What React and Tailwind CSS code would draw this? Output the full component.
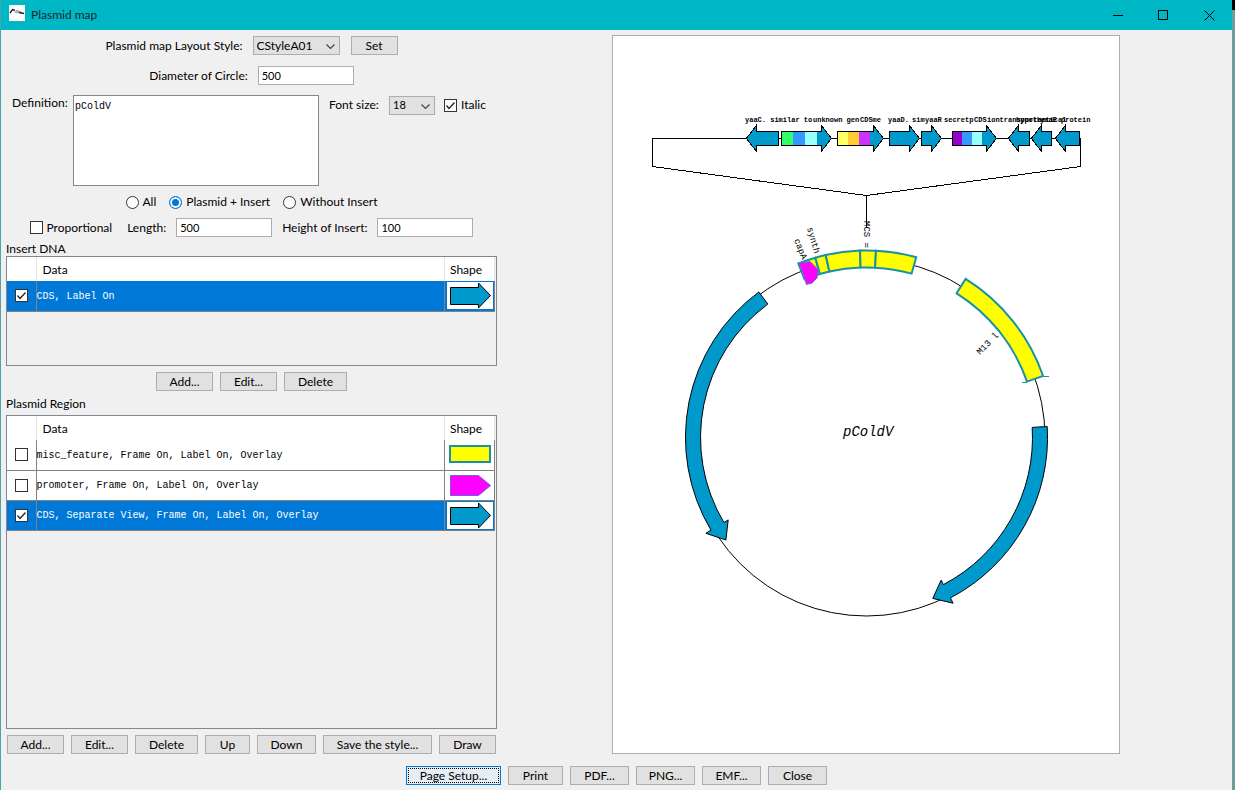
import React, { useState } from 'react';

const BLUE = '#0099cc';
const FRAME = '#1890a8';

// Center and radius of the plasmid circle
const CX = 253.5;
const CY = 401.5;
const RADIUS = 178.5;

// Angle 0 is the top of the circle, clockwise
const polar = (r, deg) => {
  const a = (deg * Math.PI) / 180;
  return `${(CX + r * Math.sin(a)).toFixed(1)} ${(CY - r * Math.cos(a)).toFixed(1)}`;
};

const bandPath = (r1, r2, from, to) =>
  `M${polar(r2, from)} A${r2} ${r2} 0 0 1 ${polar(r2, to)} L${polar(r1, to)} A${r1} ${r1} 0 0 0 ${polar(r1, from)} Z`;

// Curved arrow, the head ends at tip
const arrowPath = (from, to, tip) => {
  const cw = tip > from ? 1 : 0;
  return `M${polar(181, from)} A181 181 0 0 ${cw} ${polar(181, to)} L${polar(187, to)} L${polar(174, tip)} L${polar(161, to)} L${polar(166, to)} A166 166 0 0 ${1 - cw} ${polar(166, from)} Z`;
};

const genes = [
  { start: 165, tip: 133 },
  { start: 168, tip: 218, colors: ['#33ff66', '#3399ff', '#99ffff'], step: 12 },
  { start: 224, tip: 270, colors: ['#ffff66', '#ffcc33', '#cc33ff'], step: 11 },
  { start: 276, tip: 306 },
  { start: 308, tip: 328 },
  { start: 339, tip: 383, colors: ['#9900cc', '#3399ff', '#99ffff'], step: 10 },
  { start: 416, tip: 395 },
  { start: 438, tip: 418 },
  { start: 466, tip: 442 },
];

const geneLabels = [
  { x: 132, text: 'yaaC. similar to' },
  { x: 200, text: 'unknown gen' },
  { x: 247, text: 'CDSme' },
  { x: 275, text: 'yaaD.' },
  { x: 299, text: 'sim' },
  { x: 312, text: 'yaaR' },
  { x: 331, text: 'secretp' },
  { x: 361, text: 'CDS' },
  { x: 374, text: 'iontransporter' },
  { x: 403, text: 'hypothetical' },
  { x: 427, text: 'yaaE protein' },
];

const insertRows = [{ text: 'CDS, Label On', shape: 'arrow', on: true }];

const regionRows = [
  { text: 'misc_feature, Frame On, Label On, Overlay', shape: 'box', on: false },
  { text: 'promoter, Frame On, Label On, Overlay', shape: 'tag', on: false },
  { text: 'CDS, Separate View, Frame On, Label On, Overlay', shape: 'arrow', on: true },
];

const Gene = ({ start, tip, colors = [], step }) => {
  const back = tip > start ? tip - 10 : tip + 10;
  return (
    <g>
      <path
        d={`M${start} 95 H${back} V89 L${tip} 102 L${back} 115 V109 H${start} Z`}
        fill={BLUE}
      />
      {colors.map((color, i) => (
        <rect key={color} x={start + i * step} y="95" width={step} height="14" fill={color} />
      ))}
      <path
        d={`M${start} 95 H${back} V89 L${tip} 102 L${back} 115 V109 H${start} Z`}
        fill="none"
        stroke="#000"
      />
    </g>
  );
};

const PlasmidDrawing = () => (
  <svg
    viewBox="0 0 506 717"
    preserveAspectRatio="xMidYMin meet"
    className="block h-full w-full font-['Liberation_Mono',monospace]"
    role="img"
    aria-label="Plasmid map"
  >
    {/* Insert */}
    <g shapeRendering="crispEdges">
      <path
        d="M39.5 102.5 H467.5 V130.5 L253.5 159.5 L39.5 130.5 Z M253.5 159.5 V192"
        fill="none"
        stroke="#000"
      />
      <g transform="translate(.4 .4)">
        {genes.map((gene) => (
          <Gene key={gene.start} {...gene} />
        ))}
      </g>
    </g>
    <g fontSize="7" fontWeight="bold">
      {geneLabels.map((label) => (
        <text key={label.x} x={label.x} y="86">
          {label.text}
        </text>
      ))}
    </g>

    {/* Plasmid */}
    <circle cx={CX} cy={CY} r={RADIUS} fill="none" stroke="#000" />
    <path d={arrowPath(-36.5, -120.8, -126.1)} fill={BLUE} stroke="#000" />
    <path d={arrowPath(86.5, 152.4, 157.6)} fill={BLUE} stroke="#000" />
    <g fill="#ffff00" stroke={FRAME} strokeWidth="2">
      <path d={bandPath(170, 187, 32, 70.8)} />
      <path d="M429 340.5 H436 M409 346.5 H414" strokeWidth="1" />
      <path d={bandPath(170, 187, -21.4, -15.9)} />
      <path d={bandPath(170, 187, -15.9, -12.6)} />
      <path d={bandPath(170, 187, -12.6, -2)} />
      <path d={bandPath(170, 187, -2, 2.9)} />
      <path d={bandPath(170, 187, 2.9, 15.4)} />
    </g>
    <path
      d="M186 227 L197 225.5 L205.5 234 L204 242 L199 247 L193.5 248.5 Z"
      fill="#ff00ff"
      stroke="#4a7fc0"
    />

    {/* Labels */}
    <g fontSize="9">
      <text transform="translate(251 185) rotate(90)">MCS =</text>
      <text transform="translate(194 192) rotate(74)">synth</text>
      <text transform="translate(181 204) rotate(68)">capA</text>
      <text transform="translate(367 319) rotate(-45)">M13 l</text>
    </g>
    <text x="230" y="400" fontSize="14" fontStyle="italic">
      pColdV
    </text>
  </svg>
);

const Shape = ({ kind }) => (
  <svg viewBox="0 0 46 27" className="mx-auto block h-[27px] w-[46px] bg-white" aria-hidden="true">
    {kind === 'arrow' && (
      <path
        d="M3.5 5.5 H31.5 V1 L43.5 13.5 L31.5 26 V22.5 H3.5 Z"
        fill={BLUE}
        stroke="#000"
      />
    )}
    {kind === 'box' && (
      <rect x="3" y="5" width="40" height="16" fill="#ffff00" stroke={FRAME} strokeWidth="2" />
    )}
    {kind === 'tag' && (
      <path d="M3.5 3.5 H31.5 L43.5 13.5 L31.5 23.5 H3.5 Z" fill="#ff00ff" stroke="#7060d8" />
    )}
  </svg>
);

const CheckBox = ({ defaultChecked = false, ...props }) => (
  <span className="relative inline-flex h-[13px] w-[13px] shrink-0">
    <input
      type="checkbox"
      defaultChecked={defaultChecked}
      className="peer h-[13px] w-[13px] appearance-none border border-[#333] bg-white"
      {...props}
    />
    <svg
      viewBox="0 0 13 13"
      className="pointer-events-none absolute inset-0 hidden peer-checked:block"
      aria-hidden="true"
    >
      <path d="M2.5 6.5 L5 9.5 L10.5 3.5" fill="none" stroke="#222" strokeWidth="1.3" />
    </svg>
  </span>
);

const Select = ({ id, value, className }) => (
  <span className="relative inline-flex">
    <select
      id={id}
      defaultValue={value}
      className={`h-[19px] appearance-none border border-[#adadad] bg-[#e1e1e1] pl-[3px] ${className}`}
    >
      <option>{value}</option>
    </select>
    <svg
      viewBox="0 0 9 6"
      className="pointer-events-none absolute right-[5px] top-2 h-1.5 w-[9px]"
      aria-hidden="true"
    >
      <path d="M.5 .5 L4.5 4.5 L8.5 .5" fill="none" stroke="#444" strokeWidth="1.2" />
    </svg>
  </span>
);

const NumberField = ({ id, value }) => (
  <input
    id={id}
    type="text"
    defaultValue={value}
    className="h-[19px] w-24 border border-[#adadad] bg-white px-[3px] text-[11px]"
  />
);

const Button = ({ children, className = '', focused = false }) => (
  <button
    type="button"
    className={`h-[19px] shrink-0 border text-center ${
      focused
        ? 'border-[#0078d7] bg-[#e5edf5] outline-1 -outline-offset-3 outline-dotted outline-black'
        : 'border-[#adadad] bg-[#e1e1e1]'
    } ${className}`}
  >
    {children}
  </button>
);

const DataTable = ({ rows, label, className }) => (
  <div className={`border border-[#828790] pr-px ${className}`}>
    <table aria-label={label} className="w-full table-fixed border-collapse">
      <thead>
        <tr className="h-6 bg-white text-left">
          <th className="w-[29px] border-r border-[#e5e5e5]" aria-label="Show" />
          <th className="border-r border-[#e5e5e5] pt-0.5 pl-[6px] font-normal">Data</th>
          <th className="w-[50px] border-r border-[#e5e5e5] pt-0.5 pl-[5px] font-normal">Shape</th>
        </tr>
      </thead>
      <tbody>
        {rows.map((row) => (
          <tr
            key={row.text}
            className={`h-[30px] border-b border-[#828282] ${
              row.on ? 'bg-[#0078d7] text-white' : 'bg-white'
            }`}
          >
            <td className="border-r border-[#828282] p-0">
              <div className="flex justify-center">
                <CheckBox defaultChecked={row.on} aria-label={row.text} />
              </div>
            </td>
            <td className="border-r border-[#828282] p-0 pt-0.5 font-['Liberation_Mono',monospace] text-[10px] whitespace-nowrap">
              {row.text}
            </td>
            <td className="border-r border-[#828282] p-0">
              <Shape kind={row.shape} />
            </td>
          </tr>
        ))}
      </tbody>
    </table>
  </div>
);

const TitleBar = () => (
  <header className="flex h-[30px] items-center bg-[#00b7c6] pl-2">
    <svg viewBox="0 0 16 16" className="mb-1 h-4 w-4 bg-white" aria-hidden="true">
      <path d="M5 8 L8 4.5 L15 8.5 Z" fill="#aaa" />
      <path d="M1 8 L3.5 4.5 L6 5.5 M10 7.5 L15 8.5" fill="none" stroke="#224" strokeWidth="1.4" />
    </svg>
    <h1 className="ml-[6px] flex-1 text-xs text-[#102a2e]">Plasmid map</h1>
    <div className="flex">
      <button type="button" aria-label="Minimize" className="flex h-[30px] w-[45px] items-center justify-center">
        <svg viewBox="0 0 11 11" className="h-[11px] w-[11px]">
          <path d="M0 5.5 H10" stroke="#000" />
        </svg>
      </button>
      <button type="button" aria-label="Maximize" className="flex h-[30px] w-[45px] items-center justify-center">
        <svg viewBox="0 0 11 11" className="h-[11px] w-[11px]" shapeRendering="crispEdges">
          <path d="M.5 .5 H9.5 V9.5 H.5 Z" fill="none" stroke="#000" />
        </svg>
      </button>
      <button type="button" aria-label="Close" className="flex h-[30px] w-[46px] items-center justify-center">
        <svg viewBox="0 0 11 11" className="h-[11px] w-[11px]">
          <path d="M.5 .5 L10.5 10.5 M10.5 .5 L.5 10.5" stroke="#000" />
        </svg>
      </button>
    </div>
  </header>
);

const Settings = () => {
  const [view, setView] = useState('Plasmid + Insert');

  return (
    <form className="flex flex-col">
      <div className="flex items-center justify-center">
        <label htmlFor="style">Plasmid map Layout Style:</label>
        <span className="mr-[11px] ml-[10px] flex">
          <Select id="style" value="CStyleA01" className="w-[87px]" />
        </span>
        <Button className="w-[47px]">Set</Button>
      </div>

      <div className="mt-[11px] flex items-center justify-center gap-[10px]">
        <label htmlFor="diameter">Diameter of Circle:</label>
        <NumberField id="diameter" value="500" />
      </div>

      <div className="mt-[10px] flex items-start pl-[6px]">
        <label htmlFor="definition" className="w-[61px]">
          Definition:
        </label>
        <textarea
          id="definition"
          defaultValue="pColdV"
          className="h-[91px] w-[246px] resize-none border border-[#828790] bg-white px-px py-1 font-['Liberation_Mono',monospace] text-[10px]"
        />
        <div className="ml-[10px] flex h-5 items-center">
          <label htmlFor="fontsize" className="w-[60px]">
            Font size:
          </label>
          <Select id="fontsize" value="18" className="w-[46px] text-[11px]" />
          <label className="ml-[9px] flex items-center gap-[4px]">
            <CheckBox defaultChecked />
            Italic
          </label>
        </div>
      </div>

      {/* Which parts are drawn */}
      <div className="mt-[8px] flex items-center justify-center gap-[13px]">
        {['All', 'Plasmid + Insert', 'Without Insert'].map((name) => (
          <label key={name} className="flex items-center gap-[4px]">
            <input
              type="radio"
              name="view"
              checked={view === name}
              onChange={() => setView(name)}
              className="h-[13px] w-[13px] appearance-none rounded-full border border-[#333] bg-white checked:border-[#0078d7] checked:bg-[#0078d7] checked:shadow-[inset_0_0_0_2px_#fff]"
            />
            {name}
          </label>
        ))}
      </div>

      <div className="mt-2 flex items-center justify-center">
        <label className="flex items-center gap-[4px]">
          <CheckBox />
          Proportional
        </label>
        <label htmlFor="length" className="mr-[10px] ml-[15px]">
          Length:
        </label>
        <NumberField id="length" value="500" />
        <label htmlFor="height" className="mx-[10px]">
          Height of Insert:
        </label>
        <NumberField id="height" value="100" />
      </div>
    </form>
  );
};

const App = () => (
  <div className="flex min-h-screen bg-[#6f9a9e] font-[Lato,sans-serif] text-xs text-black">
    <div className="flex flex-1 flex-col border-l border-[#4ba3ab] bg-[#f0f0f0]">
      <TitleBar />
      <main className="flex flex-1 pt-[5px]">
        <section className="ml-[5px] flex w-[491px] shrink-0 flex-col pt-px">
          <Settings />

          <h2 className="mt-[5px] leading-[14px]">Insert DNA</h2>
          <DataTable rows={insertRows} label="Insert DNA" className="h-[110px]" />
          <div className="mt-[6px] flex justify-center gap-[7px]">
            <Button className="w-[57px]">Add...</Button>
            <Button className="w-[57px]">Edit...</Button>
            <Button className="w-[63px]">Delete</Button>
          </div>

          <h2 className="mt-[6px] mb-[4px] leading-[14px]">Plasmid Region</h2>
          <DataTable rows={regionRows} label="Plasmid Region" className="flex-1" />
          <div className="mt-[6px] flex justify-center gap-[7px]">
            <Button className="w-[57px]">Add...</Button>
            <Button className="w-[57px]">Edit...</Button>
            <Button className="w-[63px]">Delete</Button>
            <Button className="w-[45px]">Up</Button>
            <Button className="w-[59px]">Down</Button>
            <Button className="w-[109px]">Save the style...</Button>
            <Button className="w-[57px]">Draw</Button>
          </div>
        </section>

        {/* Preview page */}
        <section className="flex flex-1 justify-center pl-0.5">
          <div className="w-[508px] border border-[#adadad] bg-white">
            <PlasmidDrawing />
          </div>
        </section>
      </main>

      <footer className="mt-3 mb-[5px] flex justify-center gap-[7px]">
        <Button className="w-[95px]" focused>
          Page Setup...
        </Button>
        <Button className="w-[55px]">Print</Button>
        <Button className="w-[59px]">PDF...</Button>
        <Button className="w-[59px]">PNG...</Button>
        <Button className="w-[59px]">EMF...</Button>
        <Button className="w-[59px]">Close</Button>
      </footer>
    </div>
    <div className="w-[3px] border-t-[10px] border-black" />
  </div>
);

export default App;
